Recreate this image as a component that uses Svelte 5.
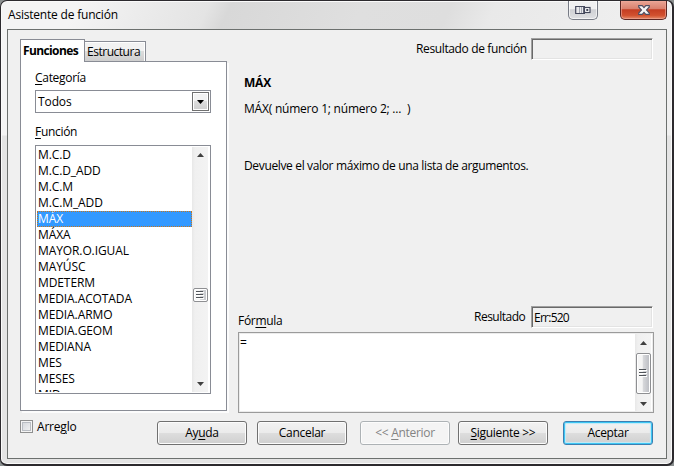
<script>
  const functions = [
    'M.C.D', 'M.C.D_ADD', 'M.C.M', 'M.C.M_ADD', 'MÁX', 'MÁXA', 'MAYOR.O.IGUAL', 'MAYÚSC',
    'MDETERM', 'MEDIA.ACOTADA', 'MEDIA.ARMO', 'MEDIA.GEOM', 'MEDIANA', 'MES', 'MESES', 'MID'
  ];
  let selected = $state('MÁX');
</script>

{#snippet arrow(up)}
  <svg class="arrow" width="7" height="4" viewBox="0 0 7 4">
    <path d={up ? 'M0 4 L3.5 0 L7 4Z' : 'M0 0 L3.5 4 L7 0Z'} fill="#404040" />
  </svg>
{/snippet}

{#snippet grip()}
  <svg width="8" height="9" viewBox="0 0 8 9">
    <path d="M0 1.5H8M0 4.5H8M0 7.5H8" stroke="#fff" />
    <path d="M0 .5H7M0 3.5H7M0 6.5H7" stroke="#50545a" />
  </svg>
{/snippet}

<div class="window">
  <header>
    <h1>Asistente de función</h1>
    <button class="cap dock" aria-label="Acoplar">
      <svg width="16" height="10" viewBox="0 0 16 10">
        <path d="M10 8.5H.7V1.5H10" fill="#e9e9ec" stroke="#44485c" stroke-width="1.2" />
        <path d="M4.5 2V8M6.5 2V8" stroke="#a6a9b4" />
        <path d="M8.5 2V8" stroke="#666a7a" />
        <rect x="9.5" y="2.5" width="5.5" height="5" fill="#fff" stroke="#44485c" stroke-width="1.2" />
        <rect x="11.3" y="4" width="2" height="2" fill="#44485c" />
      </svg>
    </button>
    <button class="cap close" aria-label="Cerrar">
      <svg width="12" height="10" viewBox="0 0 12 10">
        <path d="M.7.6H4.2L6 2.6L7.8.6H11.3V2L8.5 5L11.3 8V9.4H7.8L6 7.4L4.2 9.4H.7V8L3.5 5L.7 2Z" fill="#f7f7f7" stroke="#4c4c60" stroke-width="1.1" />
      </svg>
    </button>
  </header>

  <main>
    <div class="body">
      <section class="left">
        <nav>
          <div class="tab active">Funciones</div>
          <div class="tab second">Estructura</div>
        </nav>
        <div class="panel">
          <label class="cat"><u>C</u>ategoría</label>
          <div class="select"><span>Todos</span><i><svg width="7" height="4" viewBox="0 0 7 4"><path d="M0 0H7L3.5 4Z" /></svg></i></div>
          <label class="fun"><u>F</u>unción</label>
          <div class="list">
            <div class="rows">
              {#each functions as name}
                <div class="row" class:sel={name === selected}>{name}</div>
              {/each}
            </div>
            <div class="scroll">
              {@render arrow(true)}
              <div class="thumb small">{@render grip()}</div>
              {@render arrow(false)}
            </div>
          </div>
        </div>
      </section>

      <section class="right">
        <div class="result first"><span class="rf">Resultado de función</span><div class="field"></div></div>
        <h2>MÁX</h2>
        <p class="sig">MÁX( <span>número 1; número 2; ...&nbsp; )</span></p>
        <p class="desc">Devuelve el valor máximo de una lista de argumentos.</p>
        <div class="result lower">
          <span class="formula-label">Fór<u>m</u>ula</span>
          <span class="r">Resultado</span>
          <div class="field">Err:520</div>
        </div>
        <div class="formula">
          <span>=</span>
          <div class="scroll">
            {@render arrow(true)}
            <div class="thumb big">{@render grip()}</div>
            {@render arrow(false)}
          </div>
        </div>
      </section>
    </div>

    <footer>
      <div class="check"><i></i><span>Arre<u>g</u>lo</span></div>
      <button class="btn help"><span>Ay<u>u</u>da</span></button>
      <button class="btn cancel"><span>Cancelar</span></button>
      <button class="btn prev" disabled><span>&lt;&lt; <u>A</u>nterior</span></button>
      <button class="btn next"><span><u>S</u>iguiente &gt;&gt;</span></button>
      <button class="btn ok"><span>Aceptar</span></button>
    </footer>
  </main>
</div>

<style>
  :global(body) { background: #8b9090; }
  * { box-sizing: border-box; }
  .window {
    width: 674px; height: 466px; overflow: hidden;
    border: 1px solid #2c2a2e; border-right-width: 2px; border-bottom-width: 2px;
    border-radius: 7px;
    box-shadow: inset 0 0 0 1px #fafafa;
    background: linear-gradient(180deg, transparent 134px, #e4e4e4 135px),
      linear-gradient(115deg, #f4f4f4 0 70px, #e9e9e9 150px, #e4e4e4 190px, #d8d8d8 210px, #dfdfdf 330px, #dedede 410px, #e9e9e9 450px, #f0f0f0 620px);
    padding: 0 5px 5px 6px;
    display: flex; flex-direction: column;
    font: 12px/16px "Open Sans", "Noto Sans", sans-serif;
    letter-spacing: -0.3px; color: #000;
  }
  u { text-decoration: underline; text-underline-offset: 2px; text-decoration-thickness: 1px; }
  header { height: 28px; flex: none; display: flex; align-items: flex-start; }
  h1 { font: inherit; margin: 6px auto 0 1px; letter-spacing: -0.2px; }
  .cap {
    height: 19px; padding: 0; border: 1px solid #777b85; border-top: 0;
    border-radius: 0 0 5px 5px; display: flex; align-items: center; justify-content: center;
    box-shadow: inset 0 0 0 1px #ffffffa0;
    background: linear-gradient(#f0f0f1 0 45%, #cfd0d4 48%, #dfe0e3);
  }
  .dock { width: 30px; margin-right: 22px; }
  .close { width: 47px; border-color: #5b2622; box-shadow: inset 0 0 0 1px #efa899a0;
    background: linear-gradient(#e9a595 0, #d97f6c 45%, #c43d22 48%, #d2512f 80%, #e58b69); }
  main { width: 660px; height: 430px; border: 1px solid #6c706e; background: #f0f0f0; flex: none; }
  .body { display: flex; height: 390px; padding: 8px 0 0 12px; }
  .left { width: 207px; padding-top: 1px; flex: none; }
  nav { display: flex; align-items: flex-end; height: 22px; }
  .tab { border: 1px solid #898c95; border-bottom: 0; white-space: nowrap; }
  .active { width: 65px; height: 23px; margin-bottom: -1px; position: relative; background: #fff; padding: 3px 0 0 2px; font-weight: 700; letter-spacing: -0.62px; }
  .second { width: 61px; height: 20px; border-left: 0; padding: 2px 0 0 2px; box-shadow: inset -1px 1px #fff;
    background: linear-gradient(#f2f2f2 0 45%, #dddddd 50%, #cecece); letter-spacing: -0.48px; }
  .panel { height: 350px; border: 1px solid #898c95; background: #fff; box-shadow: 2px 2px #fcfcfc; padding: 8px 15px 0 14px; display: flex; flex-direction: column; }
  .cat { height: 20px; }
  .select { height: 23px; border: 1px solid #898c95; display: flex; padding: 1px; justify-content: space-between; flex: none; }
  .select span { margin: 2px 0 0 1px; letter-spacing: -0.1px; }
  .select i { width: 17px; height: 19px; border: 1px solid #707070; box-shadow: inset 0 0 0 1px #fff; background: linear-gradient(#f2f2f2 45%, #ddd 50%, #cfcfcf); display: flex; align-items: center; justify-content: center; }
  .fun { margin-top: 11px; height: 21px; }
  .list { height: 249px; border: 1px solid #898c95; padding: 1px; display: flex; justify-content: space-between; }
  .rows { width: 155px; overflow: hidden; height: 245px; }
  .row { height: 16px; line-height: 16px; padding-left: 1px; letter-spacing: -0.1px; white-space: nowrap; }
  .sel { background: #39f; color: #fff; outline: 1px dotted #c8761c; outline-offset: -1px; }
  .scroll { width: 16px; background: linear-gradient(90deg, #e8e8e8, #f0f0f0 3px, #f3f3f3); display: flex; flex-direction: column; align-items: center; margin-right: 1px; }
  .arrow { flex: none; margin-top: 6px; }
  .thumb { border: 1px solid #8e8f92; border-radius: 2px; box-shadow: inset 0 0 0 1px #fff; width: 15px; display: flex; align-items: center; justify-content: center; background: linear-gradient(90deg, #f5f5f5 0 45%, #d9dadd 50%, #c3c5ca); flex: none; }
  .small { height: 14px; margin-top: 131px; }
  .list .arrow:last-child { margin-top: 80px; }
  .right { width: 416px; margin-left: 11px; display: flex; flex-direction: column; }
  .result { display: flex; width: 415px; height: 22px; flex: none; }
  .field { width: 122px; height: 22px; border: 1px solid; border-color: #a0a0a0 #fff #fff #a0a0a0; box-shadow: inset 1px 1px #696969, inset -1px -1px #e3e3e3; padding: 3px 0 0 2px; letter-spacing: -0.75px; }
  .rf { margin: 3px 5px 0 auto; width: 110px; white-space: nowrap; letter-spacing: -0.37px; }
  h2 { font: inherit; font-weight: 700; margin: 15px 0 0 6px; height: 16px; letter-spacing: -0.2px; }
  p { margin: 0 0 0 6px; white-space: nowrap; }
  .sig { margin-top: 10px; letter-spacing: -0.22px; }
  .desc { margin-top: 41px; letter-spacing: -0.35px; }
  .lower { margin-top: 132px; }
  .formula-label { margin-top: 7px; letter-spacing: -0.3px; }
  .r { margin: 3px 4px 0 auto; width: 53px; letter-spacing: -0.5px; }
  .formula { height: 81px; margin-top: 4px; border: 1px solid #9b9b9b; background: #fff; display: flex; justify-content: space-between; padding: 1px; box-shadow: inset 0 0 0 1px #ececec; flex: none; }
  .formula > span { margin-top: 1px; }
  .big { height: 41px; margin-top: 8px; background: linear-gradient(90deg, #f5f5f5 0 40%, #d6d7da 50%, #b9bbc1); }
  .formula .arrow { margin-top: 7px; }
  .formula .arrow:last-child { margin-top: 8px; }
  footer { display: flex; padding: 0 0 0 12px; }
  .check { width: 137px; display: flex; }
  .check i { width: 13px; height: 13px; border: 1px solid #8e8f8f; box-shadow: inset 0 0 0 1px #f4f4f4, inset 0 0 0 2px #b9bdc3; background: linear-gradient(135deg, #cfd3d8, #f6f6f6); }
  .check span { margin-left: 4px; margin-top: -1px; letter-spacing: -0.2px; }
  .btn { width: 90px; height: 24px; margin-top: 1px; padding: 0; font: inherit; color: #000; letter-spacing: -0.3px; white-space: nowrap;
    border: 1px solid #707070; border-radius: 3px; box-shadow: inset 0 0 0 1px #fcfcfc; background: linear-gradient(#f2f2f2, #ebebeb 48%, #ddd 52%, #cfcfcf); }
  .cancel { margin-left: 10px; }
  .prev { margin-left: 13px; color: #838383; border-color: #adb2b5; background: #f4f4f4; }
  .next { margin-left: 8px; }
  .ok { margin-left: 15px; border-color: #3c7fb1; box-shadow: inset 0 0 0 1px #3cc6f4, inset 0 0 1px 2px #bfeaf8; }
</style>
